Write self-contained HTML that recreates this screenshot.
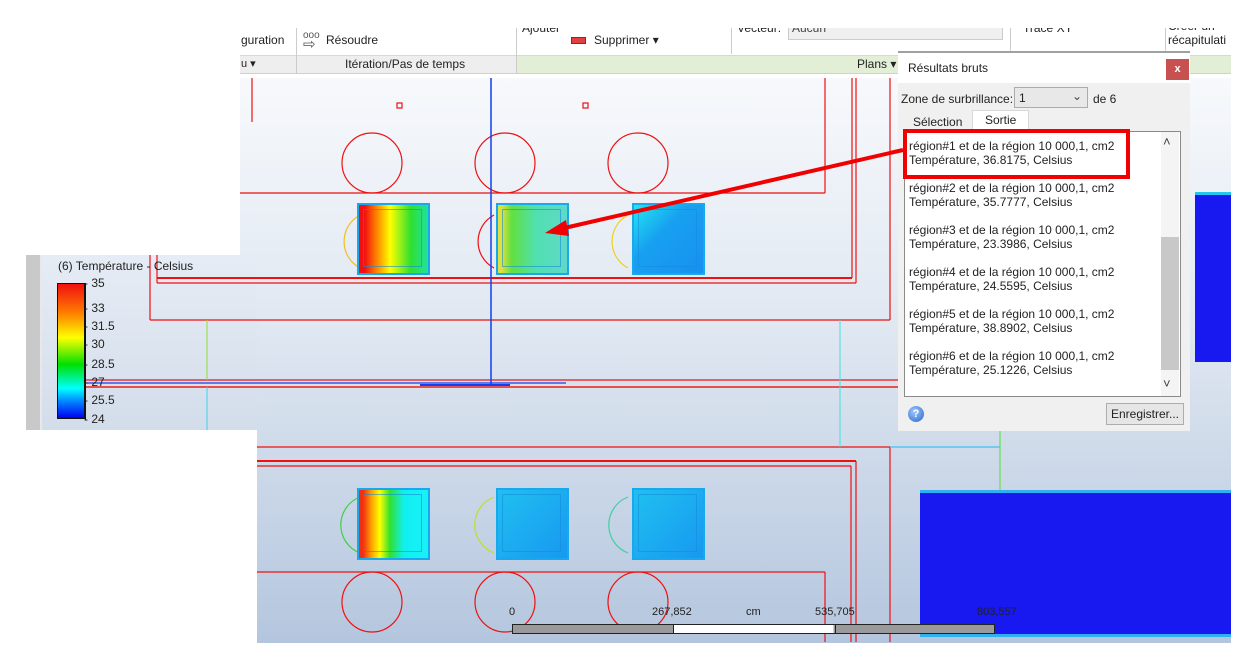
<!DOCTYPE html>
<html><head><meta charset="utf-8"><style>
*{margin:0;padding:0;box-sizing:border-box}
body{width:1239px;height:658px;background:#fff;position:relative;overflow:hidden;font-family:"Liberation Sans",sans-serif;font-size:12px;color:#222}
.a{position:absolute}
.cv{background:linear-gradient(#f7f9fc,#dfe7f1 45%,#b4c6de)}
.t{position:absolute;white-space:nowrap;font-size:12px}
.sq{position:absolute;width:73px;height:72px;border:2px solid #18a8f0}
.sq::after{content:"";position:absolute;left:4px;top:4px;right:6px;bottom:6px;border:1px solid rgba(20,140,220,.6)}
</style></head><body>
<!-- canvas -->
<div class="a cv" style="left:240px;top:78px;width:991px;height:565px"></div>
<div class="a" style="left:42px;top:255px;width:215px;height:175px;background:linear-gradient(#e6ecf5,#d3ddea)"></div>
<div class="a" style="left:26px;top:255px;width:16px;height:175px;background:#c9c9c9;border-right:2px solid #e8e8e8"></div>
<div class="a" style="left:0;top:78px;width:240px;height:177px;background:#fff"></div>

<svg class="a" style="left:0;top:0" width="1239" height="658">
<g fill="none" stroke="#f01010" stroke-width="1.2">
<line x1="252" y1="78" x2="252" y2="122"/>
<line x1="240" y1="193" x2="825" y2="193"/>
<line x1="825" y1="78" x2="825" y2="193"/>
<line x1="852" y1="78" x2="852" y2="278"/>
<line x1="856" y1="78" x2="856" y2="283"/>
<line x1="890" y1="78" x2="890" y2="320"/>
<line x1="157" y1="278" x2="852" y2="278" stroke-width="2"/>
<line x1="157" y1="283" x2="856" y2="283"/>
<line x1="150" y1="320" x2="890" y2="320"/>
<line x1="150" y1="255" x2="150" y2="320"/>
<line x1="157" y1="255" x2="157" y2="283"/>
<line x1="85" y1="380" x2="900" y2="380"/>
<line x1="85" y1="387" x2="900" y2="387" stroke="#e85050" stroke-width="2"/>
<line x1="257" y1="447" x2="890" y2="447"/>
<line x1="890" y1="447" x2="890" y2="642"/>
<line x1="257" y1="461" x2="856" y2="461" stroke-width="2"/>
<line x1="257" y1="466" x2="851" y2="466"/>
<line x1="851" y1="466" x2="851" y2="642"/>
<line x1="856" y1="461" x2="856" y2="642"/>
<line x1="257" y1="572" x2="825" y2="572"/>
<line x1="825" y1="572" x2="825" y2="642"/>
<line x1="890" y1="447" x2="1000" y2="447" stroke="#40c0f0"/>
<rect x="397" y="103" width="5" height="5"/><rect x="583" y="103" width="5" height="5"/>
<circle cx="372" cy="163" r="30"/><circle cx="505" cy="163" r="30"/><circle cx="638" cy="163" r="30"/>
<circle cx="372" cy="602" r="30"/><circle cx="505" cy="602" r="30"/><circle cx="638" cy="602" r="30"/>
<path d="M360 215 A30 30 0 0 0 360 268" stroke="#f0c020"/>
<path d="M494 215 A30 30 0 0 0 494 268"/>
<path d="M628 215 A30 30 0 0 0 628 268" stroke="#f0d020"/>
<path d="M360 497 A30 30 0 0 0 360 553" stroke="#40d040"/>
<path d="M494 497 A30 30 0 0 0 494 553" stroke="#c0e020"/>
<path d="M628 497 A30 30 0 0 0 628 553" stroke="#40d0a0"/>
</g>
<line x1="491" y1="78" x2="491" y2="384" stroke="#1040f0" stroke-width="1.5"/>
<line x1="85" y1="383" x2="566" y2="383" stroke="#1040f0" stroke-width="1.2"/>
<line x1="420" y1="385" x2="510" y2="385" stroke="#1040f0" stroke-width="2"/>
<line x1="207" y1="320" x2="207" y2="380" stroke="#90e030"/>
<line x1="207" y1="387" x2="207" y2="430" stroke="#40d0f0"/>
<line x1="840" y1="320" x2="840" y2="447" stroke="#40e0e0"/>
<line x1="1000" y1="430" x2="1000" y2="490" stroke="#50e030"/>
</svg>

<!-- bottom-left white -->
<div class="a" style="left:0;top:430px;width:257px;height:228px;background:#fff"></div>
<div class="a" style="left:0;top:643px;width:1239px;height:15px;background:#fff"></div>

<!-- heat squares -->
<div class="sq" style="left:357px;top:203px;background:linear-gradient(90deg,#f01010 8%,#ff8000 25%,#ffff00 45%,#30e030 75%,#20e0a0)"></div>
<div class="sq" style="left:496px;top:203px;background:linear-gradient(90deg,#e0e040 5%,#60e040 20%,#50e0b0 55%,#60d8c8)"></div>
<div class="sq" style="left:632px;top:203px;background:linear-gradient(135deg,#20e8f0,#18a0f0 40%,#1890f0)"></div>
<div class="sq" style="left:357px;top:488px;background:linear-gradient(90deg,#f03010 6%,#ffa000 18%,#ffff00 30%,#30e030 45%,#10f0f0 65%,#18f0f8)"></div>
<div class="sq" style="left:496px;top:488px;background:linear-gradient(135deg,#20c0f0,#1898f0)"></div>
<div class="sq" style="left:632px;top:488px;background:linear-gradient(135deg,#20c0f0,#1898f0)"></div>
<!-- blue regions -->
<div class="a" style="left:920px;top:490px;width:311px;height:147px;background:#1818f0;border-top:3px solid #30b0f0;border-bottom:3px solid #30b0f0"></div>
<div class="a" style="left:1195px;top:192px;width:36px;height:170px;background:#1818f0;border-top:3px solid #20c8f0"></div>

<!-- ribbon -->
<div class="a" style="left:240px;top:28px;width:991px;height:48px;background:#fff;overflow:hidden">
<div class="a" style="left:0;top:27px;width:276px;height:19px;background:#eeeeee;border-top:1px solid #d8d8d8;border-bottom:1px solid #d0d0d0"></div>
<div class="a" style="left:276px;top:27px;width:715px;height:19px;background:#e2efd6;border-top:1px solid #cfe0c0;border-bottom:1px solid #c8d8b8"></div>
<div class="a" style="left:56px;top:0;width:1px;height:46px;background:#ccc"></div>
<div class="a" style="left:276px;top:0;width:1px;height:46px;background:#ccc"></div>
<div class="a" style="left:491px;top:0;width:1px;height:26px;background:#ccc"></div>
<div class="a" style="left:770px;top:0;width:1px;height:26px;background:#ccc"></div>
<div class="a" style="left:925px;top:0;width:1px;height:26px;background:#ccc"></div>
<div class="t" style="left:1px;top:5px">guration</div>
<div class="t" style="left:1px;top:29px;font-size:11px">u ▾</div>
<div class="t" style="left:63px;top:2px;font-size:10px;color:#555">ooo</div>
<div class="t" style="left:63px;top:7px;font-size:15px;color:#555">⇨</div>
<div class="t" style="left:86px;top:5px">Résoudre</div>
<div class="t" style="left:105px;top:29px">Itération/Pas de temps</div>
<div class="t" style="left:282px;top:-7px">Ajouter</div>
<div class="a" style="left:331px;top:9px;width:15px;height:7px;background:#e04040;border:1px solid #a02020"></div>
<div class="t" style="left:354px;top:5px">Supprimer ▾</div>
<div class="t" style="left:497px;top:-7px">Vecteur:</div>
<div class="a" style="left:548px;top:-2px;width:215px;height:14px;background:#f0f0f0;border:1px solid #ccc"></div>
<div class="t" style="left:552px;top:-7px;color:#444">Aucun</div>
<div class="t" style="left:783px;top:-7px">Tracé XY</div>
<div class="t" style="left:928px;top:-9px">Créer un</div>
<div class="t" style="left:928px;top:5px">récapitulati</div>
<div class="t" style="left:617px;top:29px">Plans ▾</div>
</div>

<!-- legend -->
<div class="t" style="left:58px;top:259px;font-size:12px">(6) Température - Celsius</div>
<div class="a" style="left:57px;top:283px;width:28px;height:136px;border:1px solid #111;background:linear-gradient(#f01010,#ff8000 22%,#ffff00 40%,#00e000 60%,#00ffff 78%,#0080ff 88%,#0000f0)"></div>
<div class="a" style="left:85px;top:283px;width:6px;height:137px;border-left:1px solid #111"></div>
<div class="t" style="left:84px;top:276px">- 35</div>
<div class="t" style="left:84px;top:301px">- 33</div>
<div class="t" style="left:84px;top:319px">- 31.5</div>
<div class="t" style="left:84px;top:337px">- 30</div>
<div class="t" style="left:84px;top:357px">- 28.5</div>
<div class="t" style="left:84px;top:375px">- 27</div>
<div class="t" style="left:84px;top:393px">- 25.5</div>
<div class="t" style="left:84px;top:412px">- 24</div>

<!-- scale bar -->
<div class="t" style="left:509px;top:606px;font-size:11px">0</div>
<div class="t" style="left:652px;top:606px;font-size:11px">267,852</div>
<div class="t" style="left:746px;top:606px;font-size:11px">cm</div>
<div class="t" style="left:815px;top:606px;font-size:11px">535,705</div>
<div class="t" style="left:977px;top:606px;font-size:11px">803,557</div>
<div class="a" style="left:512px;top:624px;width:483px;height:10px;border:1px solid #222;background:linear-gradient(90deg,#9a9a9a 33.3%,#fff 33.3%,#fff 66.6%,#9a9a9a 66.6%)"></div>
<div class="a" style="left:673px;top:624px;width:1px;height:10px;background:#222"></div>
<div class="a" style="left:835px;top:624px;width:1px;height:10px;background:#222"></div>

<!-- dialog -->
<div class="a" style="left:898px;top:51px;width:292px;height:380px;background:#f0f0f0;border-top:2px solid #a0a0a0"></div>
<div class="a" style="left:898px;top:53px;width:292px;height:30px;background:#fff"></div>
<div class="t" style="left:908px;top:61px">Résultats bruts</div>
<div class="a" style="left:1166px;top:59px;width:23px;height:21px;background:#c75050;color:#fff;font-size:11px;font-weight:bold;text-align:center;line-height:20px">x</div>
<div class="t" style="left:901px;top:92px">Zone de surbrillance:</div>
<div class="a" style="left:1014px;top:87px;width:74px;height:21px;background:#e8e8e8;border:1px solid #acacac;padding:3px 4px">1<span style="position:absolute;right:5px;top:1px;font-size:12px;color:#444">⌄</span></div>
<div class="t" style="left:1093px;top:92px">de 6</div>
<div class="t" style="left:913px;top:115px">Sélection</div>
<div class="a" style="left:972px;top:110px;width:57px;height:22px;background:#fff;border:1px solid #d8d8d8;border-bottom:none"></div>
<div class="t" style="left:985px;top:113px">Sortie</div>
<div class="a" style="left:904px;top:131px;width:277px;height:266px;background:#fff;border:1px solid #8a8a8a"></div>
<div class="a" style="left:1161px;top:132px;width:18px;height:264px;background:#f4f4f4"></div>
<div class="a" style="left:1161px;top:237px;width:18px;height:133px;background:#c8c8c8"></div>
<div class="t" style="left:1163px;top:134px;font-size:13px;color:#444">˄</div>
<div class="t" style="left:1163px;top:376px;font-size:13px;color:#444">˅</div>
<div class="a" style="left:903px;top:129px;width:227px;height:50px;border:4px solid #f00000"></div>
<div class="t" style="left:909px;top:139px;line-height:14px">région#1 et de la région 10 000,1, cm2<br>Température, 36.8175, Celsius</div>
<div class="t" style="left:909px;top:181px;line-height:14px">région#2 et de la région 10 000,1, cm2<br>Température, 35.7777, Celsius</div>
<div class="t" style="left:909px;top:223px;line-height:14px">région#3 et de la région 10 000,1, cm2<br>Température, 23.3986, Celsius</div>
<div class="t" style="left:909px;top:265px;line-height:14px">région#4 et de la région 10 000,1, cm2<br>Température, 24.5595, Celsius</div>
<div class="t" style="left:909px;top:307px;line-height:14px">région#5 et de la région 10 000,1, cm2<br>Température, 38.8902, Celsius</div>
<div class="t" style="left:909px;top:349px;line-height:14px">région#6 et de la région 10 000,1, cm2<br>Température, 25.1226, Celsius</div>
<div class="a" style="left:908px;top:406px;width:16px;height:16px;border-radius:50%;background:radial-gradient(circle at 40% 35%,#9cc8ff,#2a64c8);color:#fff;font-size:11px;font-weight:bold;text-align:center;line-height:16px">?</div>
<div class="a" style="left:1106px;top:403px;width:78px;height:22px;background:#e6e6e6;border:1px solid #adadad;text-align:center;line-height:20px">Enregistrer...</div>

<!-- arrow -->
<svg class="a" style="left:0;top:0" width="1239" height="658">
<line x1="903" y1="150" x2="560" y2="229" stroke="#f00000" stroke-width="4"/>
<polygon points="545,233 566,220 569,236" fill="#f00000"/>
</svg>
</body></html>
